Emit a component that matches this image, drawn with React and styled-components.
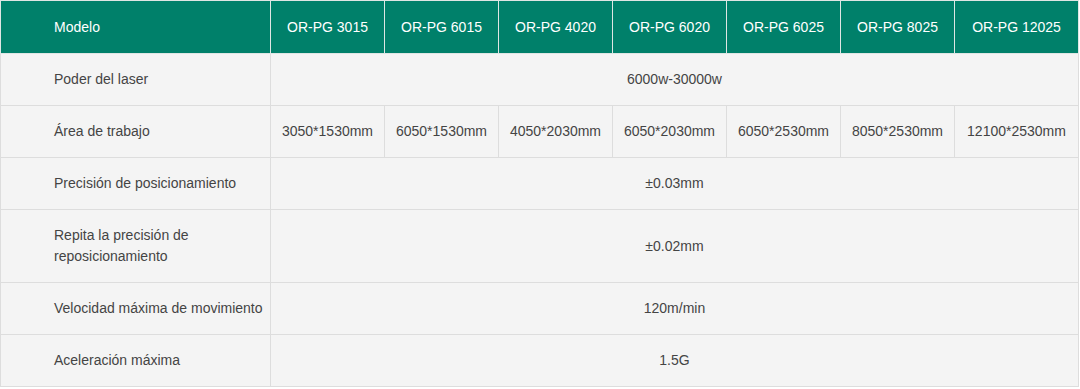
import React from 'react';
import styled, {createGlobalStyle} from 'styled-components';

const models = ['OR-PG 3015', 'OR-PG 6015', 'OR-PG 4020', 'OR-PG 6020', 'OR-PG 6025', 'OR-PG 8025', 'OR-PG 12025'];

// span: one value across every model column
const rows = [
  {label: 'Poder del laser', span: '6000w-30000w'},
  {label: 'Área de trabajo', values: ['3050*1530mm', '6050*1530mm', '4050*2030mm', '6050*2030mm', '6050*2530mm', '8050*2530mm', '12100*2530mm']},
  {label: 'Precisión de posicionamiento', span: '±0.03mm'},
  {label: 'Repita la precisión de reposicionamiento', span: '±0.02mm'},
  {label: 'Velocidad máxima de movimiento', span: '120m/min'},
  {label: 'Aceleración máxima', span: '1.5G'},
];

function App() {
  return (
    <>
      <GlobalStyle />
      <SpecTable>
        <colgroup>
          <col style={{width: 270}} />
          {models.map((m, i) => (
            <col key={m} style={{width: i === models.length - 1 ? 124 : 114}} />
          ))}
        </colgroup>
        <thead>
          <tr>
            <HeadCell $first>Modelo</HeadCell>
            {models.map(m => <HeadCell key={m}>{m}</HeadCell>)}
          </tr>
        </thead>
        <tbody>
          {rows.map(r => (
            <tr key={r.label}>
              <LabelCell>{r.label}</LabelCell>
              {r.span
                ? <ValueCell colSpan={models.length}>{r.span}</ValueCell>
                : r.values.map((v, i) => <ValueCell key={i}>{v}</ValueCell>)}
            </tr>
          ))}
        </tbody>
      </SpecTable>
    </>
  );
}

const GlobalStyle = createGlobalStyle`
  body {
    margin: 0;
    background: #fff;
    font-family: "Liberation Sans", Arial, sans-serif;
  }
`
const SpecTable = styled.table`
  width: 1078px;
  table-layout: fixed;
  border-collapse: collapse;
  font-size: 14px;
  line-height: 21px;
`
const HeadCell = styled.th`
  background-color: #00806a;
  color: #fff;
  font-weight: normal;
  text-align: ${p => (p.$first ? 'left' : 'center')};
  padding: ${p => (p.$first ? '16px 0 15px 53px' : '16px 4px 15px')};
  border: 1px solid #dfe6e4;
  white-space: nowrap;
`
const LabelCell = styled.td`
  background-color: #f4f4f4;
  color: #444;
  text-align: left;
  padding: 15px 0 15px 53px;
  border: 1px solid #dddddd;
`
const ValueCell = styled.td`
  background-color: #f4f4f4;
  color: #444;
  text-align: center;
  padding: 15px 2px;
  border: 1px solid #dddddd;
  white-space: nowrap;
`

export default App;
